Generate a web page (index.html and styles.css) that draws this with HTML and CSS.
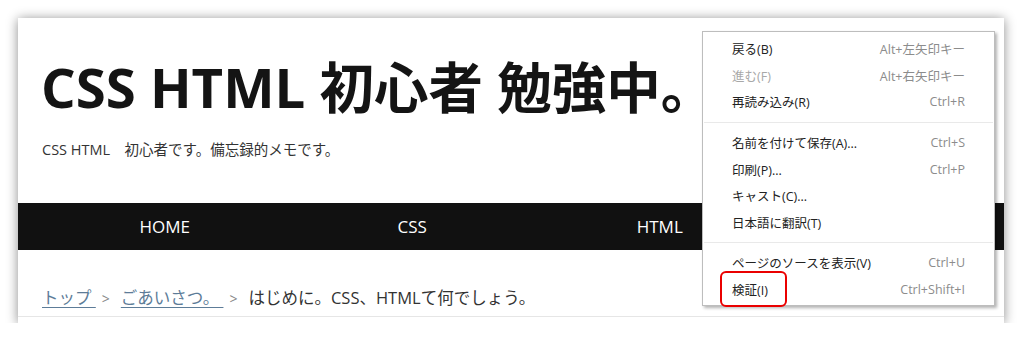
FILE: index.html
```html
<!DOCTYPE html>
<html lang="ja">
<head>
<meta charset="utf-8">
<title>CSS HTML 初心者 勉強中。</title>
<link rel="stylesheet" href="styles.css">
</head>
<body>
<div class="frame">
  <header class="site-header">
    <h1 class="site-title">CSS HTML 初心者 勉強中。</h1>
    <p class="site-desc">CSS HTML　初心者です。備忘録的メモです。</p>
  </header>
  <nav class="global-nav">
    <ul class="nav-list">
      <li class="nav-item">HOME</li>
      <li class="nav-item">CSS</li>
      <li class="nav-item">HTML</li>
      <li class="nav-item">JavaScript</li>
    </ul>
  </nav>
  <div class="breadcrumb">
    <a class="crumb-link" href="#">トップ </a><span class="crumb-sep">&gt;</span><a class="crumb-link" href="#">ごあいさつ。 </a><span class="crumb-sep">&gt;</span><span class="crumb-current">はじめに。CSS、HTMLて何でしょう。</span>
  </div>
  <div class="bottom-rule"></div>

  <div class="context-menu">
    <div class="menu-item"><span class="label">戻る(B)</span><span class="shortcut">Alt+左矢印キー</span></div>
    <div class="menu-item disabled"><span class="label">進む(F)</span><span class="shortcut">Alt+右矢印キー</span></div>
    <div class="menu-item"><span class="label">再読み込み(R)</span><span class="shortcut">Ctrl+R</span></div>
    <div class="menu-sep"></div>
    <div class="menu-item"><span class="label">名前を付けて保存(A)...</span><span class="shortcut">Ctrl+S</span></div>
    <div class="menu-item"><span class="label">印刷(P)...</span><span class="shortcut">Ctrl+P</span></div>
    <div class="menu-item"><span class="label">キャスト(C)...</span><span class="shortcut"></span></div>
    <div class="menu-item"><span class="label">日本語に翻訳(T)</span><span class="shortcut"></span></div>
    <div class="menu-sep"></div>
    <div class="menu-item"><span class="label">ページのソースを表示(V)</span><span class="shortcut">Ctrl+U</span></div>
    <div class="menu-item highlighted"><span class="label">検証(I)</span><span class="shortcut">Ctrl+Shift+I</span><span class="red-mark"></span></div>
  </div>
</div>
</body>
</html>
```
FILE: styles.css
```css
* { box-sizing: border-box; }
html, body { margin: 0; padding: 0; background: #fff; }
body {
  font-family: "Open Sans", "Noto Sans CJK JP", sans-serif;
  color: #333;
  overflow: hidden;
}
.frame {
  position: relative;
  margin: 18px 0 0 18px;
  width: 986px;
  height: 305px;
  background: #fff;
  box-shadow: 0 1px 11px rgba(0, 0, 0, 0.45);
  overflow: hidden;
}
.site-header {
  padding: 36px 0 0 23px;
  height: 185px;
}
.site-title {
  margin: 0;
  font-size: 54.5px;
  line-height: 66px;
  font-weight: 700;
  color: #141414;
  letter-spacing: 0;
  white-space: nowrap;
}
.site-desc {
  margin: 20px 0 0 1px;
  font-size: 14.5px;
  line-height: 20px;
  color: #333;
}
.global-nav {
  background: #111;
  height: 47px;
}
.nav-list {
  list-style: none;
  margin: 0;
  padding: 0 0 0 23px;
  display: flex;
  height: 100%;
  white-space: nowrap;
}
.nav-item {
  flex: 0 0 247.5px;
  display: flex;
  align-items: center;
  justify-content: center;
  color: #fff;
  font-size: 17px;
}
.breadcrumb {
  padding: 36px 0 0 24px;
  height: 66px;
  font-size: 16.5px;
  line-height: 24px;
  white-space: nowrap;
}
.crumb-link {
  color: #5d7c98;
  text-decoration: underline;
  text-underline-offset: 3px;
}
.crumb-sep {
  color: #888;
  font-size: 14px;
  margin: 0 11px 0 6px;
}
.crumb-current { color: #333; }
.bottom-rule {
  border-top: 1px solid #e6e6e6;
}
.context-menu {
  position: absolute;
  left: 684px;
  top: 13px;
  width: 293px;
  height: 275px;
  padding: 3px 0 0;
  background: #fff;
  border: 1px solid #bdbdbd;
  box-shadow: 2px 2px 3px rgba(0, 0, 0, 0.3);
  font-family: "Open Sans", "Noto Sans CJK JP", sans-serif;
  font-size: 12.5px;
}
.menu-item {
  position: relative;
  display: flex;
  align-items: center;
  justify-content: space-between;
  height: 26.8px;
  padding: 0 29px 0 29px;
  color: #222;
}
.menu-item .shortcut { color: #8c8c8c; }
.menu-item.disabled .label { color: #a8a8a8; }
.menu-item.disabled .shortcut { color: #8c8c8c; }
.menu-sep {
  height: 13.5px;
  display: flex;
  align-items: center;
  padding: 0 1px;
}
.menu-sep::before {
  content: "";
  display: block;
  width: 100%;
  border-top: 1px solid #e9e9e9;
}
.red-mark {
  position: absolute;
  left: 17px;
  top: -5px;
  width: 67px;
  height: 36px;
  border: 2.5px solid #ea0000;
  border-radius: 6px;
}
```
